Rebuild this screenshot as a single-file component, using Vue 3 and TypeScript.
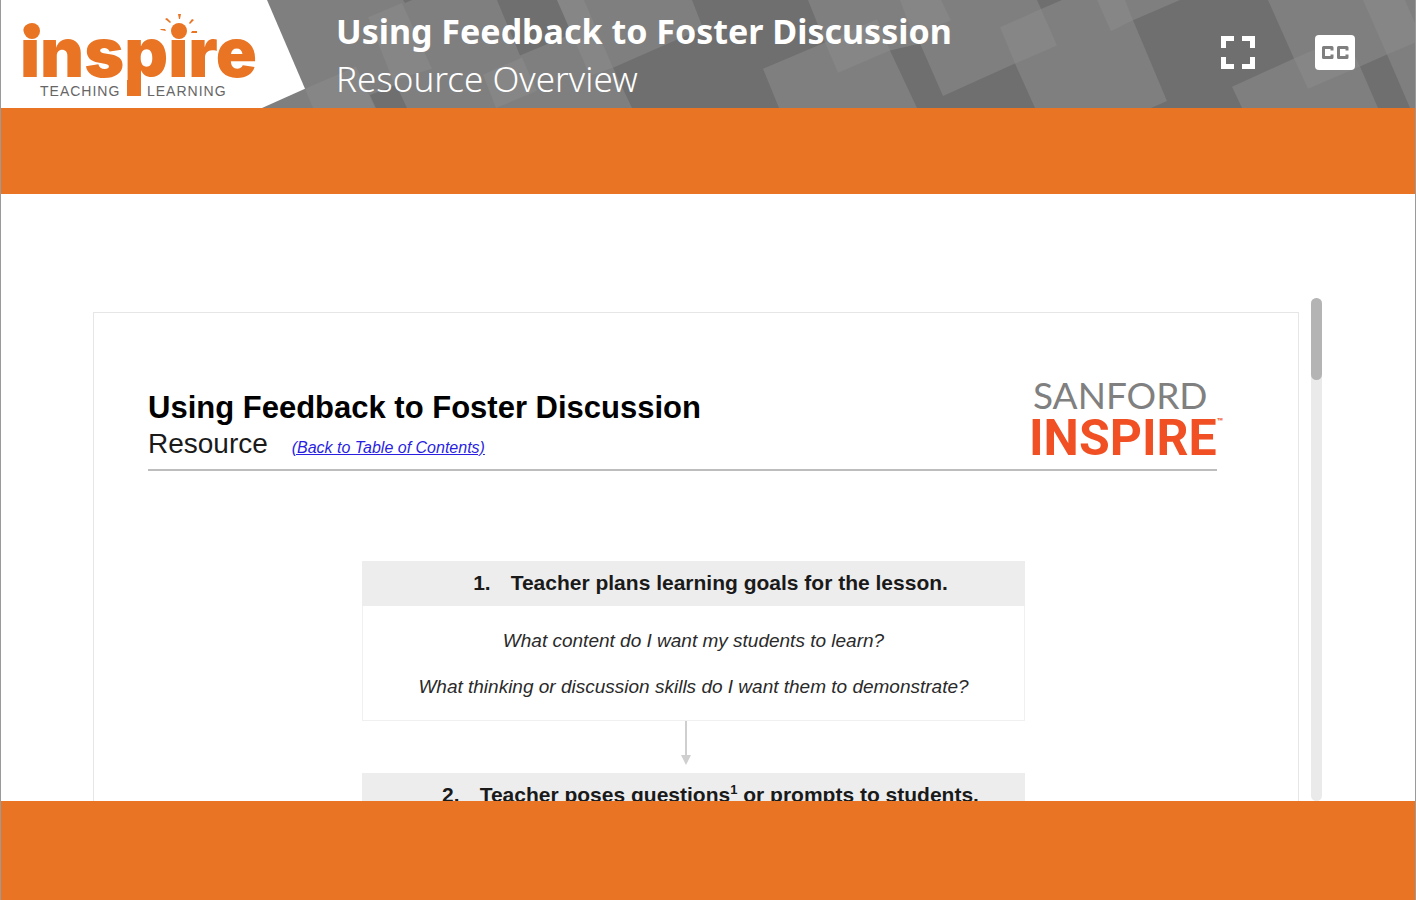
<script setup lang="ts">
interface Patch {
  tone: 'dark' | 'light'
  points: string
}

interface Step {
  number: number
  before: string
  note?: string
  after?: string
  questions: string[]
}

const patches: Patch[] = [
  { tone: 'light', points: '305,88 356,66 375,107 313,107' },
  { tone: 'light', points: '368,17 402,3 432,68 393,80' },
  { tone: 'dark', points: '403,0 405,3 412,0' },
  { tone: 'dark', points: '370,94 396,84 407,107 376,107' },
  { tone: 'dark', points: '497,0 520,55 573,33 557,0' },
  { tone: 'light', points: '483,74 522,57 537,90 496,107' },
  { tone: 'light', points: '557,0 590,75 613,67 584,0' },
  { tone: 'dark', points: '692,0 703,28 613,67 632,107 779,107 763,68 825,42 808,0' },
  { tone: 'light', points: '825,42 877,19 890,50 838,72' },
  { tone: 'light', points: '900,0 913,35 951,20 941,0' },
  { tone: 'dark', points: '890,50 917,107 1035,107 1015,63 943,95 920,43' },
  { tone: 'light', points: '1000,27 1015,63 1057,45 1041,9' },
  { tone: 'dark', points: '1037,0 1041,9 1062,0' },
  { tone: 'light', points: '1097,0 1111,31 1133,20 1125,0' },
  { tone: 'dark', points: '1133,20 1180,0 1268,0 1294,58 1232,86 1242,107 1151,107 1167,100' },
  { tone: 'light', points: '1294,58 1345,36 1360,66 1308,88' },
  { tone: 'dark', points: '1360,66 1387,54 1410,107 1378,107' },
  { tone: 'light', points: '1363,0 1387,54 1416,42 1416,25 1405,0' },
]

const steps: Step[] = [
  {
    number: 1,
    before: 'Teacher plans learning goals for the lesson.',
    questions: [
      'What content do I want my students to learn?',
      'What thinking or discussion skills do I want them to demonstrate?',
    ],
  },
  {
    number: 2,
    before: 'Teacher poses questions',
    note: '1',
    after: ' or prompts to students.',
    questions: [],
  },
]
</script>

<template>
  <div class="player">
    <header class="top">
      <svg class="pattern" viewBox="1 0 1414 107" preserveAspectRatio="none" aria-hidden="true">
        <polygon v-for="p in patches" :key="p.points" :class="p.tone" :points="p.points" />
        <polygon class="white" points="0,0 267,0 305,88 262,107 0,107" />
      </svg>
      <svg class="brand" viewBox="1 0 304 107" role="img" aria-label="inspire teaching learning">
        <text class="word" x="20" y="77">inspire</text>
        <g class="sun">
          <rect x="127" y="80" width="14" height="16" />
          <circle cx="32" cy="31" r="8" />
          <circle cx="179" cy="31" r="8" />
          <path d="M178 14h3l-1 5h-1zM165 19l2-1 4 4-1 1zM192 19l2 1-4 4-1-1zM160 29l5 0 1 2-5-1zM192 31l5 0 0 2-6 0z" />
        </g>
        <text class="tag" x="40" y="96">TEACHING</text>
        <text class="tag" x="147" y="96">LEARNING</text>
      </svg>
      <div class="titles">
        <h1>Using Feedback to Foster Discussion</h1>
        <p>Resource Overview</p>
      </div>
      <div class="tools">
        <button type="button" aria-label="Full screen">
          <svg width="34" height="34" viewBox="0 0 34 34">
            <path fill="#fff" d="M0 0H13V5H5V12H0zM21 0H34V12H29V5H21zM0 21H5V28H13V33H0zM29 21H34V33H21V28H29z" />
          </svg>
        </button>
        <button type="button" aria-label="Closed captions">
          <svg width="40" height="36" viewBox="0 0 40 36">
            <rect width="40" height="35" rx="4" fill="#fff" />
            <path fill="none" stroke="#7f7f7f" stroke-width="3" stroke-linejoin="round" d="M17 15.500V12.500H8.500V22.500H17V19.500M32 15.500V12.500H23.500V22.500H32V19.500" />
          </svg>
        </button>
      </div>
    </header>
    <div class="band"></div>
    <main class="stage">
      <article class="sheet">
        <div class="head">
          <div>
            <h2>Using Feedback to Foster Discussion</h2>
            <p class="kind">Resource <a href="#contents">(Back to Table of Contents)</a></p>
          </div>
          <div class="sanford">
            <span class="s1">SANFORD</span>
            <span class="s2">INSPIRE<span class="tm">™</span></span>
          </div>
        </div>
        <div class="flow">
          <template v-for="(s, i) in steps" :key="s.number">
            <svg v-if="i > 0" class="arrow" width="12" height="52" viewBox="0 0 12 52" aria-hidden="true">
              <path d="M5 0H7V34H11L6 44L1 34H5z" fill="#cfcfcf" />
            </svg>
            <section class="step">
              <h3><span class="num">{{ s.number }}.</span><span>{{ s.before }}<sup v-if="s.note">{{ s.note }}</sup>{{ s.after }}</span></h3>
              <div v-if="s.questions.length" class="questions">
                <p v-for="q in s.questions" :key="q">{{ q }}</p>
              </div>
            </section>
          </template>
        </div>
      </article>
      <div class="rail"><div class="thumb"></div></div>
    </main>
    <div class="band"></div>
  </div>
</template>

<style>
body {
  margin: 0;
}
</style>

<style scoped>
.player {
  display: grid;
  grid-template-rows: 108px 86px minmax(0, 1fr) 99px;
  height: 100vh;
  box-sizing: border-box;
  border: solid #9a9a9a;
  border-width: 0 1px;
  background: #fff;
  font-family: "Liberation Sans", Arial, sans-serif;
}
h1, h2, h3, p {
  margin: 0;
  font-weight: 400;
}
.top {
  position: relative;
  display: flex;
  overflow: hidden;
  background: #7f7f7f;
}
.pattern {
  position: absolute;
  inset: 0;
  width: 100%;
  height: 100%;
}
.dark { fill: #6f6f6f; }
.light { fill: #868686; }
.white { fill: #fff; }
.brand {
  position: relative;
  flex: none;
  width: 304px;
  height: 107px;
}
.word {
  font: 900 68px Inter, sans-serif;
  fill: #e87424;
}
.sun { fill: #e87424; }
.tag {
  font: 14px "Liberation Sans", Arial, sans-serif;
  letter-spacing: 1px;
  fill: #666;
}
.titles {
  position: relative;
  flex: 1;
  padding: 8px 0 0 31px;
  color: #fff;
  font-family: "Noto Sans", sans-serif;
  white-space: nowrap;
}
.titles h1 {
  font-size: 34px;
  line-height: 47px;
  font-weight: 700;
}
.titles p {
  font-size: 35px;
  line-height: 47px;
  font-weight: 300;
}
.tools {
  position: relative;
  display: flex;
  align-items: center;
  gap: 60px;
  padding: 0 60px 3px 0;
}
.tools button {
  display: block;
  padding: 0;
  border: 0;
  background: none;
  cursor: pointer;
}
.tools svg { display: block; }
.band { background: #e87424; }
.stage {
  display: flex;
  justify-content: space-between;
  overflow: hidden;
  padding: 104px 93px 0 92px;
}
.sheet {
  flex: 1;
  height: 640px;
  box-sizing: border-box;
  margin: 14px 12px 0 0;
  padding: 64px 81px 0 54px;
  border: 1px solid #e6e6e6;
}
.head {
  display: flex;
  justify-content: space-between;
  height: 92px;
  border-bottom: 2px solid #bdbdbd;
}
.head h2 {
  padding-top: 13px;
  font-size: 31px;
  line-height: 36px;
  font-weight: 700;
  color: #000;
}
.kind {
  font-size: 28px;
  line-height: 35px;
  color: #1a1a1a;
}
.kind a {
  margin-left: 16px;
  font-size: 16px;
  font-style: italic;
  color: #2a1fe0;
}
.sanford {
  display: flex;
  flex-direction: column;
  width: 188px;
  white-space: nowrap;
  font-family: Lato, sans-serif;
}
.s1 {
  padding-left: 4px;
  font-size: 37px;
  line-height: 36px;
  color: #808080;
}
.s2 {
  display: flex;
  font: 700 50px/50px Roboto, sans-serif;
  color: #f05023;
}
.tm {
  font-size: 10px;
  line-height: 18px;
}
.flow {
  display: flex;
  flex-direction: column;
  align-items: center;
  width: 663px;
  margin: 90px 0 0 214px;
}
.arrow {
  margin-right: 15px;
}
.step {
  width: 100%;
}
.step h3 {
  display: flex;
  justify-content: center;
  gap: 20px;
  padding-left: 34px;
  height: 45px;
  box-sizing: border-box;
  background: #ededed;
  font-size: 21px;
  line-height: 43px;
  font-weight: 700;
  color: #1a1a1a;
}
.step sup {
  font-size: 13px;
  line-height: 0;
}
.questions {
  display: flex;
  flex-direction: column;
  gap: 22px;
  padding: 23px 0 21px;
  border: 1px solid #f0f0f0;
  border-top: 0;
  text-align: center;
  font-size: 19px;
  line-height: 24px;
  font-style: italic;
  color: #2a2a2a;
}
.rail {
  width: 11px;
  border-radius: 6px;
  background: #eaeaea;
}
.thumb {
  height: 82px;
  border-radius: 6px;
  background: #b4b4b4;
}
</style>
